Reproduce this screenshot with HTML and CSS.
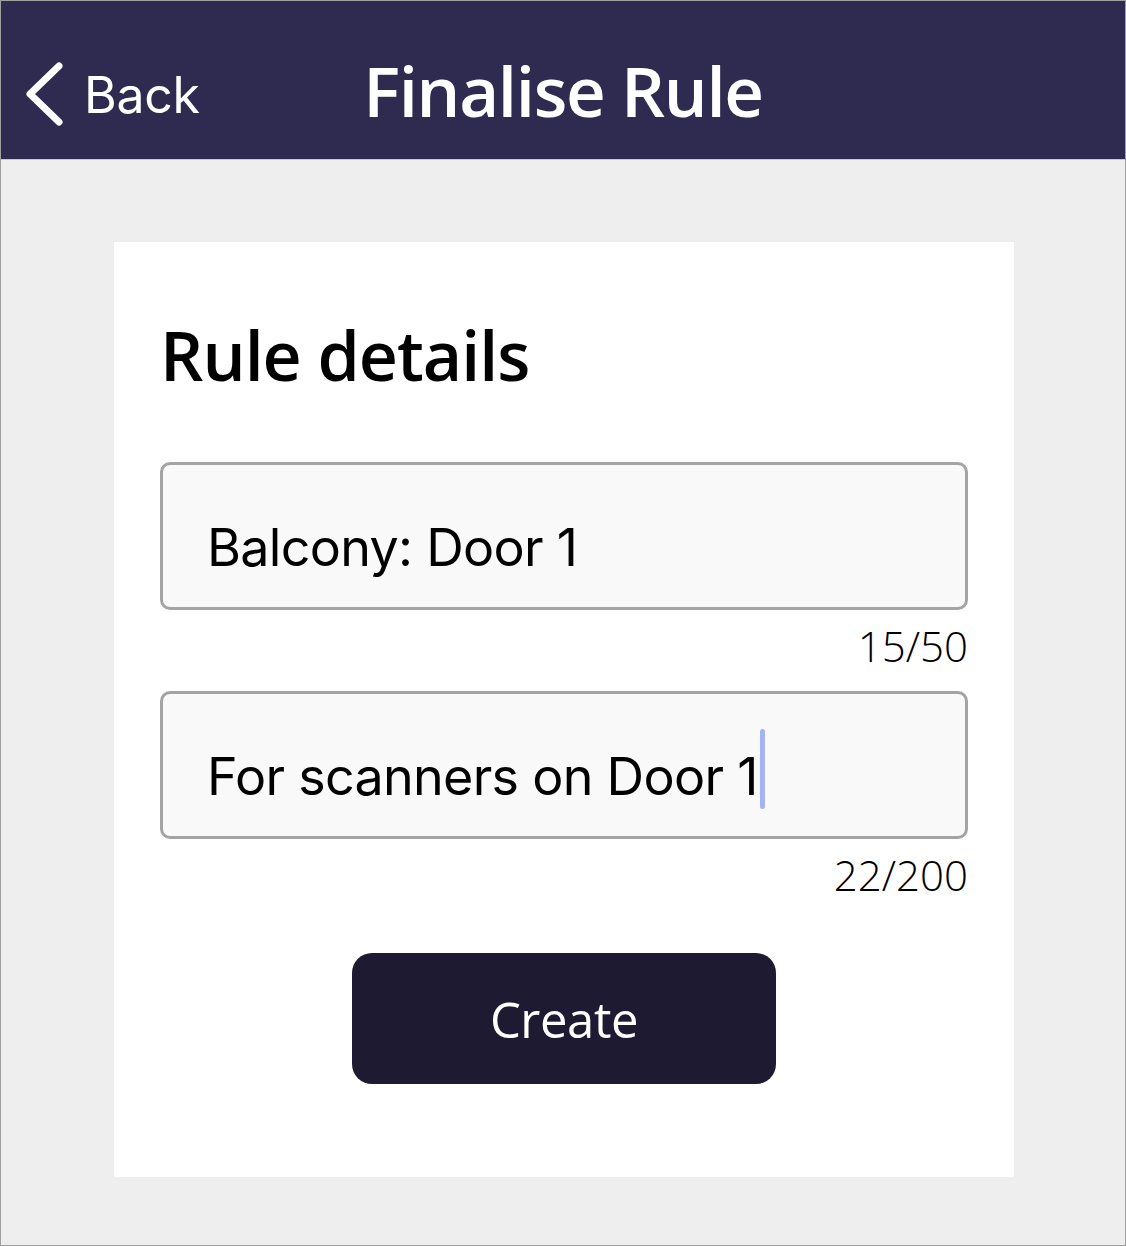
FILE: index.html
```html
<!DOCTYPE html>
<html lang="en">
<head>
<meta charset="utf-8">
<title>Finalise Rule</title>
<link rel="stylesheet" href="styles.css">
</head>
<body>
<div class="frame">
  <header class="topbar">
    <div class="back">
      <svg class="chev" width="44" height="66" viewBox="0 0 44 66" aria-hidden="true">
        <path d="M36 4 L7 32 L36 60" fill="none" stroke="#ffffff" stroke-width="7" stroke-linecap="round" stroke-linejoin="round"/>
      </svg>
      <span class="back-label">Back</span>
    </div>
    <h1 class="title">Finalise Rule</h1>
    <div class="spacer"></div>
  </header>
  <main class="content">
    <section class="card">
      <h2 class="card-title">Rule details</h2>
      <div class="field"><span class="field-text">Balcony: Door 1</span></div>
      <div class="counter">15/50</div>
      <div class="field"><span class="field-text">For scanners on Door 1</span><span class="caret"></span></div>
      <div class="counter">22/200</div>
      <div class="actions">
        <button class="btn-create" type="button">Create</button>
      </div>
    </section>
  </main>
</div>
</body>
</html>
```

FILE: styles.css
```css
html, body {
  margin: 0;
  padding: 0;
  background: #eeeeee;
}

.frame {
  box-sizing: border-box;
  width: 1126px;
  height: 1246px;
  border: 1px solid #a0a0a0;
  background: #eeeeee;
  overflow: hidden;
}

.topbar {
  box-sizing: border-box;
  height: 159px;
  padding-top: 47px;
  background: #2f2a4f;
  border-bottom: 1px solid #c9c9c9;
  display: grid;
  grid-template-columns: 1fr auto 1fr;
  align-items: start;
}

.back {
  display: flex;
  align-items: center;
  margin-top: 14px;
  padding-left: 22px;
  gap: 17px;
}

.chev {
  display: block;
}

.back-label {
  font-family: "Inter", "Liberation Sans", sans-serif;
  font-size: 50px;
  line-height: 60px;
  color: #ffffff;
  font-weight: 400;
  letter-spacing: -0.3px;
}

.title {
  margin: 0;
  font-family: "Open Sans", "Liberation Sans", sans-serif;
  font-weight: 600;
  font-size: 69px;
  line-height: 84px;
  letter-spacing: -1.3px;
  color: #ffffff;
  white-space: nowrap;
}

.content {
  padding: 82px 0 0 113px;
}

.card {
  box-sizing: border-box;
  width: 900px;
  background: #ffffff;
  padding: 71px 46px 93px 46px;
}

.card-title {
  margin: 0 0 65px 0;
  font-family: "Open Sans", "Liberation Sans", sans-serif;
  font-weight: 600;
  font-size: 68px;
  line-height: 84px;
  letter-spacing: -1px;
  color: #000000;
}

.field {
  box-sizing: border-box;
  height: 148px;
  border: 3px solid #a4a4a4;
  border-radius: 10px;
  background: #f9f9f9;
  padding: 51px 0 0 44px;
  font-family: "Inter", "Liberation Sans", sans-serif;
  font-size: 52px;
  line-height: 63px;
  letter-spacing: -0.7px;
  color: #000000;
  white-space: nowrap;
}

.caret {
  display: inline-block;
  width: 5px;
  height: 80px;
  margin: -20px 0 -4px 2px;
  border-radius: 2.5px;
  background: #a3b3f3;
  vertical-align: -10px;
}

.counter {
  margin: 11px 0 20px 0;
  text-align: right;
  font-family: "Open Sans", "Liberation Sans", sans-serif;
  font-weight: 300;
  font-size: 42px;
  line-height: 50px;
  color: #000000;
}

.actions {
  display: flex;
  justify-content: center;
  padding-top: 33px;
}

.btn-create {
  width: 424px;
  height: 131px;
  border: none;
  border-radius: 20px;
  background: #1e1a31;
  color: #ffffff;
  font-family: "Open Sans", "Liberation Sans", sans-serif;
  font-weight: 400;
  font-size: 49px;
  letter-spacing: -0.4px;
  padding: 0;
  cursor: pointer;
}
```
